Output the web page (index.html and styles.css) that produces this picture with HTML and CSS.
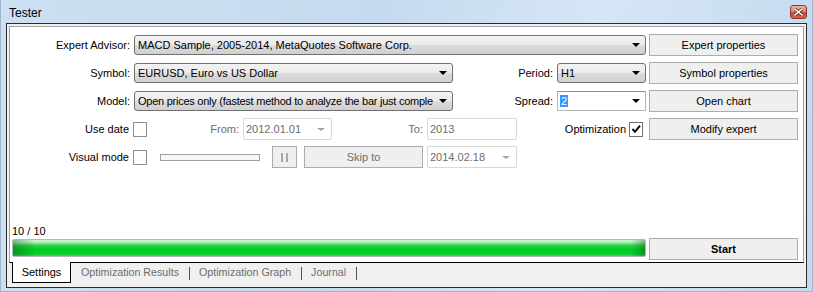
FILE: index.html
```html
<!DOCTYPE html>
<html>
<head>
<meta charset="utf-8">
<title>Tester</title>
<link rel="stylesheet" href="styles.css">
</head>
<body>
<div class="window">
  <div class="titlebar">
    <span class="title">Tester</span>
    <div class="close">
      <svg width="9" height="8" viewBox="0 0 9 8"><path d="M1 1 L8 7 M8 1 L1 7" stroke="#5a2010" stroke-width="3" stroke-linecap="square"/><path d="M1 1 L8 7 M8 1 L1 7" stroke="#ffffff" stroke-width="1.6" stroke-linecap="square"/></svg>
    </div>
  </div>
  <div class="client">
    <div class="page">
      <div class="form">
        <div class="row">
          <span class="lbl lbl-main">Expert Advisor:</span>
          <div class="combo combo-ea"><span class="combo-text">MACD Sample, 2005-2014, MetaQuotes Software Corp.</span><span class="arrow"></span></div>
          <div class="btn side">Expert properties</div>
        </div>
        <div class="row">
          <span class="lbl lbl-main">Symbol:</span>
          <div class="combo combo-mid"><span class="combo-text">EURUSD, Euro vs US Dollar</span><span class="arrow"></span></div>
          <span class="lbl lbl-right">Period:</span>
          <div class="combo combo-small"><span class="combo-text">H1</span><span class="arrow"></span></div>
          <div class="btn side">Symbol properties</div>
        </div>
        <div class="row">
          <span class="lbl lbl-main">Model:</span>
          <div class="combo combo-mid"><span class="combo-text combo-tight">Open prices only (fastest method to analyze the bar just comple</span><span class="arrow"></span></div>
          <span class="lbl lbl-right">Spread:</span>
          <div class="editcombo combo-small"><span class="combo-text"><span class="sel">2</span></span><span class="arrow"></span></div>
          <div class="btn side">Open chart</div>
        </div>
        <div class="row">
          <span class="lbl lbl-check">Use date</span>
          <span class="check"></span>
          <span class="lbl lbl-from dis">From:</span>
          <div class="datebox date-from"><span class="combo-text">2012.01.01</span><span class="arrow arrow-dis"></span></div>
          <span class="lbl lbl-to dis">To:</span>
          <div class="datebox date-to"><span class="combo-text">2013</span></div>
          <span class="lbl lbl-opt">Optimization</span>
          <span class="check checked"><svg width="12" height="12" viewBox="0 0 12 12"><path d="M2.5 6 L5 8.8 L10 2.6" fill="none" stroke="#000" stroke-width="1.9"/></svg></span>
          <div class="btn side side-opt">Modify expert</div>
        </div>
        <div class="row">
          <span class="lbl lbl-check">Visual mode</span>
          <span class="check"></span>
          <span class="track"></span>
          <div class="btn pause"><span class="bar"></span><span class="bar"></span></div>
          <div class="btn skip dis">Skip to</div>
          <div class="datebox date-skip"><span class="combo-text">2014.02.18</span><span class="arrow arrow-dis"></span></div>
        </div>
      </div>
      <div class="status">10 / 10</div>
      <div class="progress-row">
        <div class="progress"><div class="fill"></div></div>
        <div class="btn side start">Start</div>
      </div>
    </div>
    <div class="tabs">
      <div class="tab active">Settings</div>
      <div class="tab">Optimization Results</div><span class="sep"></span>
      <div class="tab">Optimization Graph</div><span class="sep"></span>
      <div class="tab">Journal</div><span class="sep"></span>
    </div>
  </div>
</div>
</body>
</html>
```
FILE: styles.css
```css
* { box-sizing: border-box; }
html, body { margin: 0; padding: 0; }
body {
  width: 813px;
  height: 292px;
  overflow: hidden;
  font-family: "Liberation Sans", Arial, sans-serif;
  font-size: 11px;
  color: #000;
}
.window {
  width: 813px;
  height: 292px;
  display: flex;
  flex-direction: column;
  padding: 0 5px 3px 5px;
  background: linear-gradient(100deg, #cddff2 0%, #c6daef 45%, #d6e6f7 70%, #c4d8ee 100%);
  border-left: 1px solid #9fb6cf;
  border-right: 1px solid #9fb6cf;
  border-bottom: 1px solid #9fb6cf;
}
.titlebar {
  height: 23px;
  flex: none;
  display: flex;
  justify-content: space-between;
  align-items: flex-start;
}
.title {
  padding: 5px 0 0 3px;
  line-height: 16px;
  font-size: 12px;
}
.close {
  margin-top: 5px;
  width: 17px;
  height: 14px;
  border: 1px solid #8a3a2a;
  border-radius: 3px;
  background: linear-gradient(#eab2a4 0%, #dd8a76 45%, #c8462a 55%, #d7664a 100%);
  display: flex;
  align-items: center;
  justify-content: center;
}
.client {
  flex: 1;
  display: flex;
  flex-direction: column;
  border: 1px solid #2b2b2b;
  background: #f0f0f0;
  padding: 2px 2px 0 2px;
}
.page {
  height: 237px;
  flex: none;
  display: flex;
  flex-direction: column;
  background: #fff;
  border: 1px solid #a0a0a0;
  border-bottom-color: #000;
  padding: 7px 0 1px 2px;
}
.form { flex: 1; }
.row {
  display: flex;
  align-items: center;
  height: 22px;
  margin-bottom: 6px;
}
.lbl {
  flex: none;
  text-align: right;
  white-space: nowrap;
}
.dis { color: #6d6d6d; }
.lbl-main { width: 118px; margin-right: 4px; }
.lbl-right { width: 100px; margin-right: 4px; }
.lbl-check { width: 117px; margin-right: 4px; }
.lbl-from { width: 92px; margin-right: 4px; }
.lbl-to { width: 91px; margin-right: 4px; }
.lbl-opt { width: 109px; margin-right: 3px; }

.combo, .editcombo, .datebox {
  flex: none;
  display: flex;
  align-items: center;
  height: 20px;
  padding: 0 5px 0 3px;
  overflow: hidden;
}
.combo {
  border: 1px solid #707070;
  border-radius: 3px;
  background: linear-gradient(#f3f3f3 0%, #ebebeb 48%, #dcdcdc 52%, #d0d0d0 100%);
}
.editcombo {
  border: 1px solid #b5b5b5;
  border-top-color: #8e8f8f;
  background: #fff;
  padding-left: 2px;
}
.datebox {
  border: 1px solid #d9d9d9;
  border-radius: 2px;
  background: #fff;
  color: #6d6d6d;
  height: 22px;
  padding-left: 2px;
}
.combo-text {
  flex: 1;
  white-space: nowrap;
  overflow: hidden;
}
.combo-tight { letter-spacing: -0.25px; }
.sel { background: #3399ff; color: #fff; padding: 0 1px; }
.arrow {
  flex: none;
  width: 0;
  height: 0;
  border-left: 4px solid transparent;
  border-right: 4px solid transparent;
  border-top: 4px solid #000;
  margin-left: 6px;
}
.arrow-dis {
  border-top: 3px solid #a5a5a5;
  margin-right: 1px;
}
.combo-ea { width: 512px; }
.combo-mid { width: 319px; }
.combo-small { width: 89px; }
.date-from { width: 89px; }
.date-to { width: 90px; }
.date-skip { width: 90px; margin-left: 4px; }

.btn {
  flex: none;
  display: flex;
  align-items: center;
  justify-content: center;
  height: 22px;
  background: #efefef;
  border: 1px solid #acacac;
  white-space: nowrap;
}
.side { width: 149px; margin-left: 3px; }
.side-opt { margin-left: 6px; }

.check {
  flex: none;
  width: 14px;
  height: 15px;
  border: 1px solid #8e8f8f;
  background: #fff;
  display: flex;
  align-items: center;
  justify-content: center;
}
.check.checked { border-color: #707070; }

.track {
  flex: none;
  width: 100px;
  height: 7px;
  margin-left: 13px;
  border: 1px solid #a0a0a0;
  background: #f7f7f7;
}
.pause {
  width: 25px;
  margin-left: 12px;
  gap: 3px;
}
.pause .bar {
  width: 2px;
  height: 9px;
  background: #a8a8a8;
}
.skip {
  width: 119px;
  margin-left: 7px;
}

.status {
  height: 13px;
  line-height: 13px;
  margin-bottom: 0;
}
.progress-row {
  display: flex;
  align-items: flex-start;
  height: 23px;
}
.progress {
  flex: none;
  width: 634px;
  height: 18px;
  margin-top: 1px;
  border: 1px solid #b5b5b5;
  border-radius: 2px;
  background: #e6e6e6;
  overflow: hidden;
}
.fill {
  width: 100%;
  height: 100%;
  background:
    linear-gradient(90deg, rgba(0,60,10,0.35) 0px, rgba(0,60,10,0) 22px, rgba(0,60,10,0) calc(100% - 14px), rgba(0,60,10,0.35) 100%),
    linear-gradient(#d2f6d6 0%, #aeeeb6 14%, #22d440 36%, #04cb25 60%, #06cc27 85%, #36d852 100%);
}
.start { font-weight: bold; }

.tabs {
  flex: 1;
  display: flex;
  align-items: flex-start;
  padding-left: 3px;
}
.tab {
  height: 20px;
  line-height: 19px;
  padding: 0 10px 0 9px;
  color: #6d6d6d;
  font-size: 10.7px;
  white-space: nowrap;
}
.tab.active {
  margin-top: -1px;
  height: 21px;
  line-height: 21px;
  padding: 0;
  width: 59px;
  font-size: 11px;
  color: #000;
  background: #fff;
  border: 1px solid #000;
  border-top: none;
  text-align: center;
}
.tab.active + .tab { padding-left: 10px; }
.sep {
  flex: none;
  width: 1px;
  height: 13px;
  margin-top: 4px;
  background: #555;
}
```
